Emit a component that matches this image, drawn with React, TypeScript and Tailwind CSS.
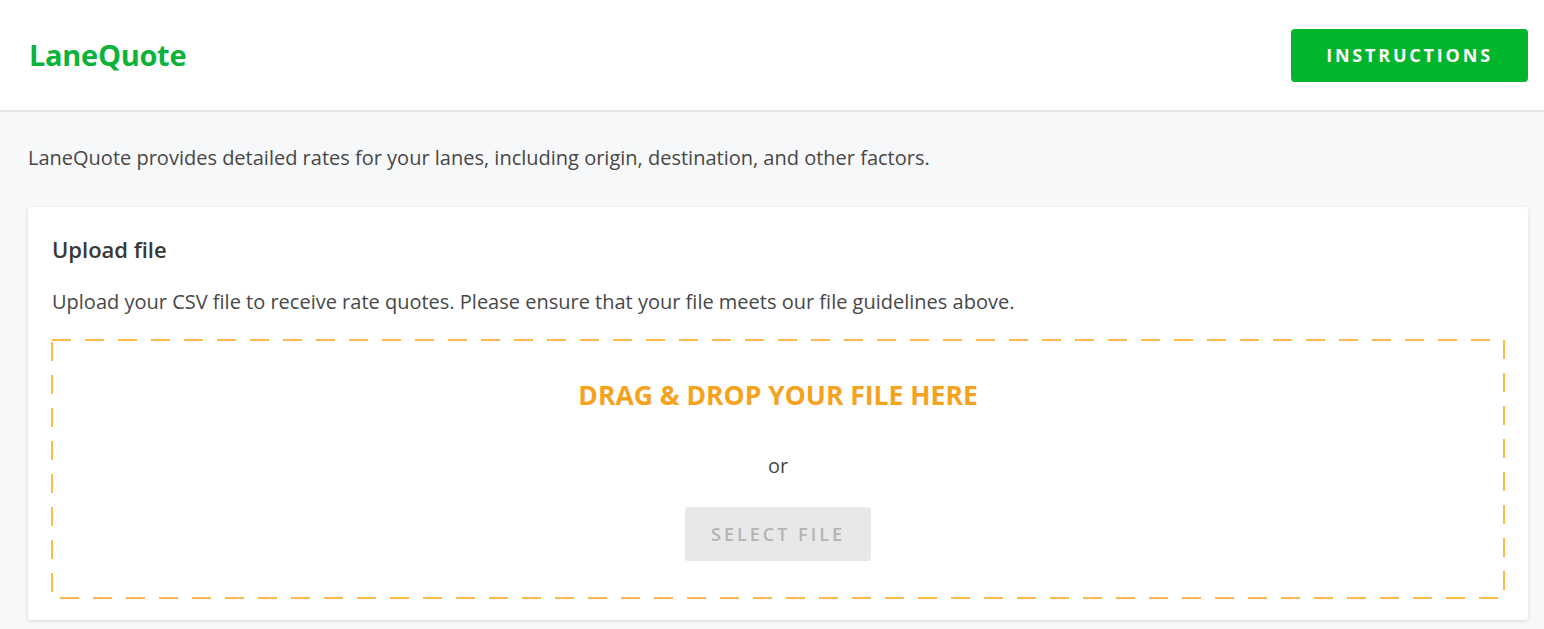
export default function App() {
  return (
    <div className="min-h-screen bg-[#f7f8fa] font-['Open_Sans',sans-serif] text-[#444]">
      <header className="flex h-[112px] items-center justify-between border-b-2 border-[#e4e6e9] bg-white pl-[29px] pr-[16px]">
        <h1 className="text-[29px] font-bold tracking-[-0.3px] text-[#0cb33a]">LaneQuote</h1>
        <button className="h-[53px] w-[237px] rounded-[4px] bg-[#02b52c] text-[18px] font-bold tracking-[2.8px] text-white">
          INSTRUCTIONS
        </button>
      </header>

      <main className="pl-[28px] pr-[16px]">
        <p className="pt-[32px] text-[20px] leading-[28px] text-[#474747]">
          LaneQuote provides detailed rates for your lanes, including origin, destination, and other factors.
        </p>

        <section className="mt-[35px] rounded-[3px] bg-white px-[24px] pb-[22px] pt-[27px] shadow-[0_1px_4px_rgba(0,0,0,0.12)]">
          <h2 className="text-[22px] font-semibold leading-[30px] text-[#383838]">Upload file</h2>
          <p className="mt-[24px] text-[20px] leading-[28px] text-[#474747]">
            Upload your CSV file to receive rate quotes. Please ensure that your file meets our file guidelines above.
          </p>

          <div className="relative mt-[24px] flex h-[258px] flex-col items-center">
            <svg className="pointer-events-none absolute inset-0 h-full w-full overflow-visible">
              <rect
                x="0"
                y="0"
                width="100%"
                height="100%"
                fill="none"
                stroke="#ffb74a"
                strokeWidth="2"
                strokeDasharray="19 14"
              />
            </svg>
            <p className="mt-[38px] text-[26.5px] font-bold leading-[34px] text-[#f6a21c]">DRAG &amp; DROP YOUR FILE HERE</p>
            <p className="mt-[40px] text-[20px] leading-[28px] text-[#474747]">or</p>
            <button
              disabled
              className="mt-[27px] h-[54px] w-[186px] rounded-[3px] bg-[#e8e8e8] text-[18px] font-semibold tracking-[3px] text-[#b4b4b4]"
            >
              SELECT FILE
            </button>
          </div>
        </section>
      </main>
    </div>
  )
}
